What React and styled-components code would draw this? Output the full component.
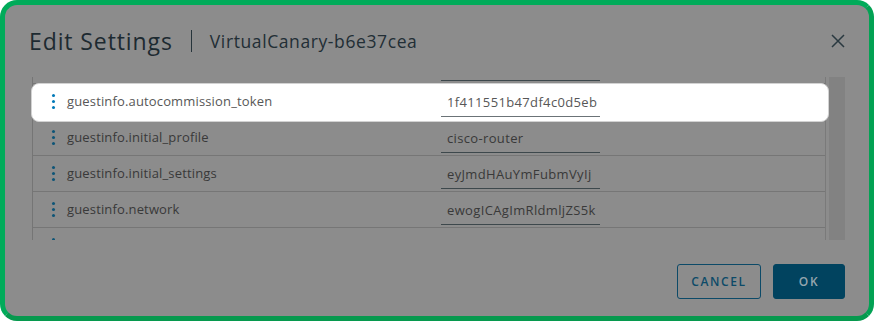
import React from "react";
import styled, { createGlobalStyle } from "styled-components";

const GlobalStyle = createGlobalStyle`
    html, body {
        margin: 0;
        padding: 0;
        background: #ffffff;
    }
    * {
        box-sizing: border-box;
    }
`

const Frame = styled.div`
    width: 874px;
    height: 321px;
    border: 5px solid #01ab5a;
    border-right-color: #03a254;
    border-bottom-color: #06994e;
    border-radius: 17px;
    background-color: #8c8c8c;
    font-family: "Open Sans", "Liberation Sans", sans-serif;
    display: flex;
    flex-direction: column;
    overflow: hidden;
`

const Header = styled.div`
    display: flex;
    align-items: center;
    padding: 24px 24px 0 24px;
    height: 48px;
`

const Title = styled.h1`
    margin: 0;
    font-size: 23px;
    font-weight: 400;
    letter-spacing: 0.9px;
    color: #1d2a31;
    line-height: 24px;
`

const Divider = styled.span`
    width: 1px;
    height: 22px;
    background-color: #26343b;
    margin: 0 18px 0 18px;
`

const SubTitle = styled.span`
    font-size: 17.5px;
    letter-spacing: 0.6px;
    color: #222e35;
    line-height: 24px;
`

const Close = styled.button`
    margin-left: auto;
    width: 14px;
    height: 14px;
    padding: 0;
    border: none;
    background: none;
    display: flex;
    cursor: pointer;
`

const Body = styled.div`
    margin-top: 24px;
    padding: 0 24px 0 26px;
`

const Viewport = styled.div`
    display: flex;
    gap: 3px;
    height: 163px;
    overflow: hidden;
    padding-left: 1px;
`

const Table = styled.div`
    flex: 1;
    border-left: 1px solid #757575;
    border-right: 1px solid #7a7a7a;
`

const List = styled.div`
    margin-top: -29px;
`

const Row = styled.div`
    position: relative;
    display: flex;
    align-items: center;
    height: 36px;
    border-bottom: 1px solid ${p => (p.$active ? "transparent" : "#767676")};

    &::before {
        content: "";
        display: ${p => (p.$active ? "block" : "none")};
        position: absolute;
        top: -1px;
        bottom: -3px;
        left: -2px;
        right: -4px;
        background-color: #ffffff;
        border: 1px solid #d2d2d2;
        border-radius: 8px;
    }
`

const Handle = styled.div`
    position: relative;
    width: 34px;
    padding-left: 19px;
    display: flex;
    flex-direction: column;
    gap: 3px;
`

const Dot = styled.span`
    width: 3px;
    height: 3px;
    border-radius: 50%;
    background-color: ${p => (p.$active ? "#0079b8" : "#0d5477")};
`

const Label = styled.div`
    position: relative;
    width: 374px;
    font-size: 13px;
    letter-spacing: 0.15px;
    margin-top: -1px;
    color: ${p => (p.$active ? "#575757" : "#393939")};
`

const Value = styled.div`
    position: relative;
    width: 159px;
    height: 24px;
    margin-top: 6px;
    padding: 0 5px 0 6px;
    font-size: 13px;
    letter-spacing: 0.35px;
    line-height: 19px;
    white-space: nowrap;
    overflow: hidden;
    color: ${p => (p.$active ? "#575757" : "#393939")};
    border-bottom: 1px solid ${p => (p.$active ? "#6b7377" : "#3d484c")};
`

const Scrollbar = styled.div`
    width: 16px;
    background-color: #828282;
`

const Footer = styled.div`
    display: flex;
    justify-content: flex-end;
    gap: 12px;
    padding: 24px 24px 0 24px;
`

const Button = styled.button`
    height: 35px;
    width: ${p => p.$width}px;
    border-radius: 3px;
    font-family: "Open Sans", "Liberation Sans", sans-serif;
    font-size: 12px;
    font-weight: 600;
    letter-spacing: 1.6px;
    cursor: pointer;
    border: 1px solid ${p => (p.$primary ? "#01435f" : "#0c4a68")};
    background-color: ${p => (p.$primary ? "#01435f" : "transparent")};
    color: ${p => (p.$primary ? "#95a6ae" : "#0c4a68")};
`

const rows = [
    { key: "", value: "" },
    { key: "guestinfo.autocommission_token", value: "1f411551b47df4c0d5eb", active: true },
    { key: "guestinfo.initial_profile", value: "cisco-router" },
    { key: "guestinfo.initial_settings", value: "eyJmdHAuYmFubmVyIj" },
    { key: "guestinfo.network", value: "ewogICAgImRldmljZS5k" },
    { key: "", value: "" },
]

const App = () => {
    return (
        <>
            <GlobalStyle />
            <Frame>
                <Header>
                    <Title>Edit Settings</Title>
                    <Divider />
                    <SubTitle>VirtualCanary-b6e37cea</SubTitle>
                    <Close aria-label="Close">
                        <svg width="14" height="14" viewBox="0 0 14 14">
                            <path d="M1 1 L13 13 M13 1 L1 13" stroke="#2a3940" strokeWidth="1.5" />
                        </svg>
                    </Close>
                </Header>
                <Body>
                    <Viewport>
                        <Table>
                            <List>
                                {rows.map((r, i) => (
                                    <Row key={i} $active={r.active}>
                                        <Handle>
                                            <Dot $active={r.active} />
                                            <Dot $active={r.active} />
                                            <Dot $active={r.active} />
                                        </Handle>
                                        <Label $active={r.active}>{r.key}</Label>
                                        <Value $active={r.active}>{r.value}</Value>
                                    </Row>
                                ))}
                            </List>
                        </Table>
                        <Scrollbar />
                    </Viewport>
                </Body>
                <Footer>
                    <Button $width={84}>CANCEL</Button>
                    <Button $width={72} $primary>OK</Button>
                </Footer>
            </Frame>
        </>
    )
}

export default App
